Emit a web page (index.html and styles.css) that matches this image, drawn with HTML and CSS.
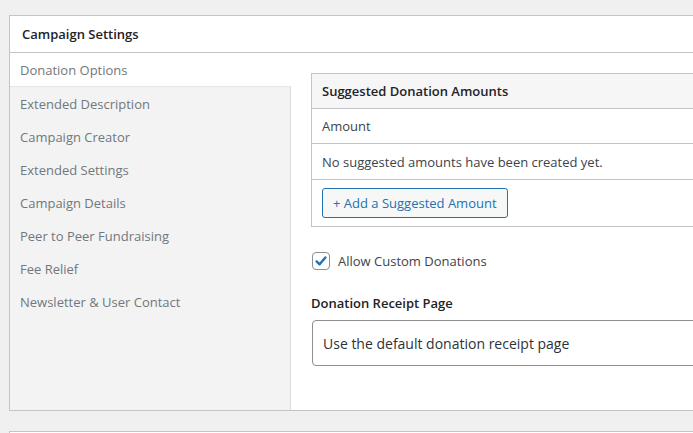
FILE: index.html
```html
<!DOCTYPE html>
<html>
<head>
<meta charset="utf-8">
<link rel="stylesheet" href="styles.css">
</head>
<body>
<div class="page">
  <section class="panel">
    <h2 class="panel-title">Campaign Settings</h2>
    <div class="panel-body">
      <ul class="tabs">
        <li class="tab active">Donation Options</li>
        <li class="tab">Extended Description</li>
        <li class="tab">Campaign Creator</li>
        <li class="tab">Extended Settings</li>
        <li class="tab">Campaign Details</li>
        <li class="tab">Peer to Peer Fundraising</li>
        <li class="tab">Fee Relief</li>
        <li class="tab">Newsletter &amp; User Contact</li>
      </ul>
      <div class="content">
        <table class="amounts">
          <thead>
            <tr><th>Suggested Donation Amounts</th></tr>
          </thead>
          <tbody>
            <tr><td>Amount</td></tr>
            <tr><td>No suggested amounts have been created yet.</td></tr>
            <tr><td class="btn-cell"><button class="btn">+ Add a Suggested Amount</button></td></tr>
          </tbody>
        </table>
        <label class="check">
          <span class="checkbox">
            <svg width="14" height="14" viewBox="0 0 14 14"><path d="M2.6 7.4 L5.6 10.3 L11.4 3.4" fill="none" stroke="#2271b1" stroke-width="2.4" stroke-linecap="round" stroke-linejoin="round"/></svg>
          </span>
          Allow Custom Donations
        </label>
        <h3 class="field-title">Donation Receipt Page</h3>
        <div class="select">Use the default donation receipt page</div>
      </div>
    </div>
  </section>
  <section class="panel next"></section>
</div>
</body>
</html>
```
FILE: styles.css
```css
html, body {
  margin: 0;
  padding: 0;
  overflow: hidden;
}
body {
  background: #f0f0f1;
  font-family: "Open Sans", "Noto Sans", sans-serif;
  font-size: 13px;
  color: #3c434a;
  width: 693px;
  height: 433px;
}
.page {
  padding: 15px 0 0 9px;
}
.panel {
  width: 760px;
  background: #fff;
  border: 1px solid #c3c4c7;
  box-sizing: border-box;
}
.panel-title {
  margin: 0;
  height: 36px;
  line-height: 36px;
  padding-left: 12px;
  font-size: 13px;
  font-weight: 600;
  color: #1d2327;
  border-bottom: 1px solid #c3c4c7;
}
.panel-body {
  display: flex;
  align-items: stretch;
}
.tabs {
  list-style: none;
  margin: 0;
  padding: 0 0 2px;
  width: 280px;
  flex: none;
  background: #f3f3f3;
  border-right: 1px solid #dcdcde;
  height: 355px;
}
.tab {
  height: 33px;
  line-height: 34px;
  padding-left: 10px;
  color: #72777c;
  font-size: 13px;
}
.tab.active {
  background: #fff;
  margin-right: -1px;
  height: 34px;
  line-height: 34px;
  border-bottom: 1px solid #e6e6e6;
  box-sizing: border-box;
}
.content {
  flex: 1;
  padding: 20px 0 0 20px;
}
.amounts {
  width: 440px;
  border-collapse: collapse;
  border: 1px solid #c3c4c7;
}
.amounts th {
  text-align: left;
  font-weight: 600;
  color: #1d2327;
  background: #f6f6f6;
  height: 34px;
  padding: 0 10px;
  border-bottom: 1px solid #c3c4c7;
}
.amounts td {
  height: 34px;
  padding: 0 10px;
  border-bottom: 1px solid #c3c4c7;
  color: #3c434a;
}
.amounts tr:nth-child(2) td {
  height: 35px;
}
.amounts td.btn-cell {
  height: 46px;
  border-bottom: 0;
}
.btn {
  font-family: inherit;
  font-size: 13px;
  color: #2271b1;
  background: #f6f7f7;
  border: 1px solid #2271b1;
  border-radius: 3px;
  height: 30px;
  padding: 0 10px;
  line-height: 28px;
}
.check {
  display: flex;
  align-items: center;
  gap: 8px;
  margin: 24px 0 0 1px;
  height: 20px;
  color: #3c434a;
}
.checkbox {
  width: 16px;
  height: 16px;
  border: 1px solid #8c8f94;
  border-radius: 4px;
  display: flex;
  align-items: center;
  justify-content: center;
  background: #fff;
}
.field-title {
  margin: 22px 0 0;
  font-size: 13px;
  font-weight: 600;
  color: #1d2327;
  line-height: 20px;
}
.select {
  margin: 7px 0 0 1px;
  height: 44px;
  line-height: 46px;
  border: 1px solid #8c8f94;
  border-radius: 4px;
  padding-left: 10px;
  font-size: 14px;
  color: #2c3338;
  width: 420px;
}
.panel.next {
  margin-top: 20px;
  height: 40px;
}
```
